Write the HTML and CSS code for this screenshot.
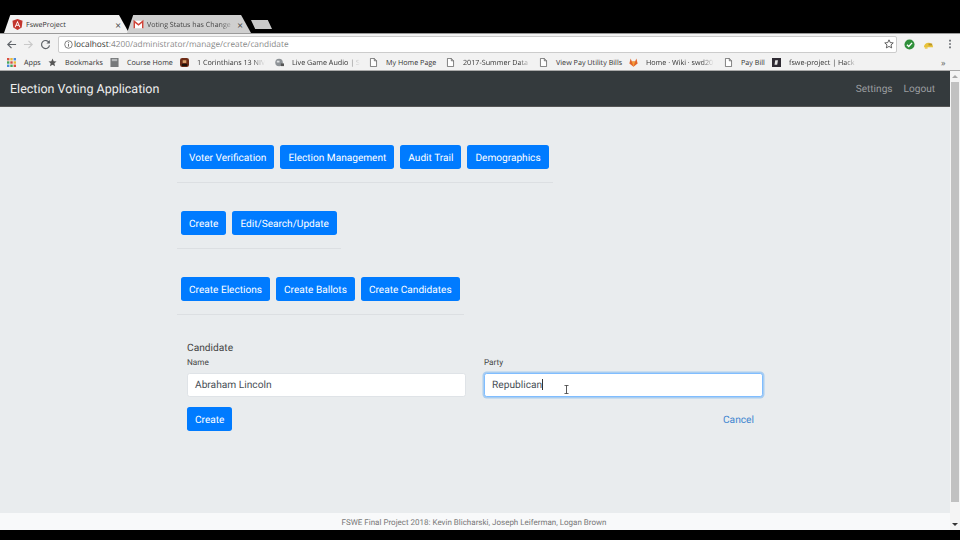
FILE: index.html
```html
<!DOCTYPE html>
<html lang="en">
<head>
    <meta charset="UTF-8">
    <title>FsweProject</title>
    <link rel="stylesheet" href="styles.css">
</head>
<body>
    <div class="tabstrip">
        <div class="tab tab-active">
            <svg class="tab-icon" viewBox="0 0 12 12"><path fill="#c3352e" d="M6 0 11.5 2 10.6 9.3 6 12 1.4 9.3.5 2z"/><path fill="#fff" d="M6 1.8 2.8 9h1.2l.6-1.6h2.8L8 9h1.2zM5 6.4 6 4l1 2.4z"/></svg>
            <span class="tab-title">FsweProject</span>
            <span class="tab-close">×</span>
        </div>
        <div class="tab tab-other">
            <svg class="tab-icon" viewBox="0 0 12 12"><path fill="#fff" d="M1 2h10v8H1z"/><path fill="none" stroke="#d0453a" stroke-width="1.6" d="M1.4 10V2.6L6 6.4l4.6-3.8V10"/></svg>
            <span class="tab-title tab-fade">Voting Status has Change</span>
            <span class="tab-close">×</span>
        </div>
        <div class="tab-new"></div>
    </div>

    <div class="toolbar">
        <svg class="tool-icon" viewBox="0 0 12 12"><path fill="none" stroke="#5f6368" stroke-width="1.3" d="M11 6H2M6 2 2 6l4 4"/></svg>
        <svg class="tool-icon" viewBox="0 0 12 12"><path fill="none" stroke="#c9c9c9" stroke-width="1.3" d="M1 6h9M6 2l4 4-4 4"/></svg>
        <svg class="tool-icon" viewBox="0 0 12 12"><path fill="none" stroke="#5f6368" stroke-width="1.3" d="M10 4A4.4 4.4 0 1 0 10.4 7"/><path fill="#5f6368" d="M10.8 1v3.8H7z"/></svg>
        <div class="omnibox">
            <svg class="info-icon" viewBox="0 0 10 10"><circle cx="5" cy="5" r="4.2" fill="none" stroke="#666" stroke-width=".9"/><path stroke="#666" d="M5 4.2v3.2M5 2.4v1"/></svg>
            <span class="url"><span class="url-host">localhost</span>:4200/administrator/manage/create/candidate</span>
            <svg class="star-icon" viewBox="0 0 12 12"><path fill="none" stroke="#444" d="m6 1 1.5 3.3 3.6.4-2.7 2.4.8 3.6L6 8.9l-3.2 1.8.8-3.6L.9 4.7l3.6-.4z"/></svg>
        </div>
        <div class="extensions">
            <svg class="ext-icon" viewBox="0 0 12 12"><circle cx="6" cy="6" r="5.5" fill="#2f8f3a"/><path fill="none" stroke="#fff" stroke-width="1.5" d="m3.2 6.2 2 2 3.6-4"/></svg>
            <svg class="ext-icon" viewBox="0 0 12 12"><path fill="#e8c23a" d="M1 9a5 5 0 0 1 10 0z"/><path fill="#b9962a" d="M6 5h4v2H6z"/><path fill="#e8c23a" d="M2 9h3v1.5H2z"/></svg>
            <svg class="menu-icon" viewBox="0 0 4 12"><path fill="#5f6368" d="M1 1h2v2H1zM1 5h2v2H1zM1 9h2v2H1z"/></svg>
        </div>
    </div>

    <div class="bookmarks">
        <div class="bm">
            <svg class="bm-icon" viewBox="0 0 9 9"><path fill="#d9503f" d="M0 0h2.4v2.4H0z"/><path fill="#e8b83a" d="M3.3 0h2.4v2.4H3.3z"/><path fill="#4a8bdc" d="M6.6 0H9v2.4H6.6z"/><path fill="#4aa65a" d="M0 3.3h2.4v2.4H0z"/><path fill="#d9503f" d="M3.3 3.3h2.4v2.4H3.3z"/><path fill="#e8b83a" d="M6.6 3.3H9v2.4H6.6z"/><path fill="#4a8bdc" d="M0 6.6h2.4V9H0z"/><path fill="#4aa65a" d="M3.3 6.6h2.4V9H3.3z"/><path fill="#d9503f" d="M6.6 6.6H9V9H6.6z"/></svg>
            <span>Apps</span>
        </div>
        <div class="bm">
            <svg class="bm-icon" viewBox="0 0 10 10"><path fill="#555" d="m5 .5 1.3 3 3.2.3-2.4 2.1.7 3.2L5 7.4 2.2 9.1l.7-3.2L.5 3.8l3.2-.3z"/></svg>
            <span>Bookmarks</span>
        </div>
        <div class="bm">
            <svg class="bm-icon" viewBox="0 0 9 10"><path fill="#77797b" d="M0 0h9v10H0z"/><path fill="#b4b6b8" d="M1.5 1h6v2.5h-6z"/></svg>
            <span>Course Home</span>
        </div>
        <div class="bm">
            <svg class="bm-icon" viewBox="0 0 10 10"><rect width="10" height="10" rx="2.5" fill="#6e2c16"/><path fill="#d9a06a" d="M3 2.5h4v3H3z"/><path fill="#1e1008" d="M2 6.5h6V9H2z"/></svg>
            <span class="bm-fade">1 Corinthians 13 NIV</span>
        </div>
        <div class="bm">
            <svg class="bm-icon" viewBox="0 0 10 10"><circle cx="4.5" cy="5" r="4.2" fill="#8d9296"/><path fill="#dfe2e4" d="M2 3h3v2H2z"/><path fill="#555" d="M6.5 6H10v3H6.5z"/></svg>
            <span class="bm-fade">Live Game Audio | S</span>
        </div>
        <div class="bm">
            <svg class="bm-icon" viewBox="0 0 8 10"><path fill="#fff" stroke="#555" stroke-width=".8" d="M.6.5h4.3l2.5 2.6v6.4H.6zM4.9.5v2.6h2.5"/></svg>
            <span>My Home Page</span>
        </div>
        <div class="bm">
            <svg class="bm-icon" viewBox="0 0 8 10"><path fill="#fff" stroke="#555" stroke-width=".8" d="M.6.5h4.3l2.5 2.6v6.4H.6zM4.9.5v2.6h2.5"/></svg>
            <span class="bm-fade">2017-Summer Data</span>
        </div>
        <div class="bm">
            <svg class="bm-icon" viewBox="0 0 8 10"><path fill="#fff" stroke="#555" stroke-width=".8" d="M.6.5h4.3l2.5 2.6v6.4H.6zM4.9.5v2.6h2.5"/></svg>
            <span>View Pay Utility Bills</span>
        </div>
        <div class="bm">
            <svg class="bm-icon" viewBox="0 0 10 10"><path fill="#e2662a" d="M5 9.6 .4 6 1.8.6 3.2 4h3.6L8.2.6 9.6 6z"/><path fill="#f6a23c" d="M5 9.6 3.2 4h3.6z"/></svg>
            <span class="bm-fade">Home · Wiki · swd20</span>
        </div>
        <div class="bm">
            <svg class="bm-icon" viewBox="0 0 8 10"><path fill="#fff" stroke="#555" stroke-width=".8" d="M.6.5h4.3l2.5 2.6v6.4H.6zM4.9.5v2.6h2.5"/></svg>
            <span>Pay Bill</span>
        </div>
        <div class="bm">
            <svg class="bm-icon" viewBox="0 0 10 10"><path fill="#2f2b33" d="M0 0h10v10H0z"/><path fill="#e6e6e6" d="M3.6 2.4h3l-.8 5.2h-3z"/></svg>
            <span class="bm-fade">fswe-project | Hack</span>
        </div>
        <span class="bm-more">»</span>
    </div>

    <div class="window">
        <div class="app">
            <nav class="navbar">
                <span class="brand">Election Voting Application</span>
                <div class="nav-links">
                    <a class="nav-link">Settings</a>
                    <a class="nav-link">Logout</a>
                </div>
            </nav>

            <main class="content">
                <div class="menu">
                    <button class="btn">Voter Verification</button>
                    <button class="btn">Election Management</button>
                    <button class="btn">Audit Trail</button>
                    <button class="btn">Demographics</button>
                </div>
                <div class="menu">
                    <button class="btn">Create</button>
                    <button class="btn">Edit/Search/Update</button>
                </div>
                <div class="menu">
                    <button class="btn">Create Elections</button>
                    <button class="btn">Create Ballots</button>
                    <button class="btn">Create Candidates</button>
                </div>

                <form class="form">
                    <div class="form-title">Candidate</div>
                    <div class="form-row">
                        <div>
                            <label class="form-label">Name</label>
                            <div class="input">Abraham Lincoln</div>
                        </div>
                        <div>
                            <label class="form-label">Party</label>
                            <div class="input input-focus">Republican<span class="caret"></span></div>
                        </div>
                    </div>
                    <div class="form-actions">
                        <button class="btn" type="button">Create</button>
                        <a class="cancel">Cancel</a>
                    </div>
                </form>

                <svg class="ibeam" viewBox="0 0 7 11"><path fill="none" stroke="#333" d="M1 .5h5M3.5.5v10M1 10.5h5"/></svg>
            </main>

            <footer class="footer">FSWE Final Project 2018: Kevin Blicharski, Joseph Leiferman, Logan Brown</footer>
        </div>

        <div class="scrollbar">
            <span class="arrow arrow-up"></span>
            <div class="thumb"></div>
            <span class="arrow arrow-down"></span>
        </div>
    </div>

    <div class="bottom-bar"></div>
</body>
</html>
```

FILE: styles.css
```css
html, body {
    margin: 0;
    height: 540px;
    overflow: hidden;
    background-color: #000;
}
body {
    display: flex;
    flex-direction: column;
    font-family: Roboto, Arial, sans-serif;
    text-rendering: geometricPrecision;
}

/* browser chrome */
.tabstrip {
    height: 18px;
    padding: 15px 0 0 4px;
    display: flex;
    align-items: flex-end;
    background-color: #000;
}
.tab {
    height: 18px;
    width: 125px;
    box-sizing: border-box;
    padding: 1px 8px 0 8px;
    display: flex;
    align-items: center;
    gap: 3px;
    font-family: "Open Sans", Arial, sans-serif;
    font-size: 7.1px;
    clip-path: polygon(0 100%, 5% 0, 92% 0, 100% 100%);
}
.tab-active {
    background-color: #f2f2f2;
    color: #333;
}
.tab-other {
    margin-left: -2px;
    padding-left: 6px;
    width: 124px;
    background-color: #cfcfcf;
    color: #444;
}
.tab-icon {
    width: 11px;
    height: 11px;
    flex: none;
}
.tab-title {
    flex: 1;
    white-space: nowrap;
    overflow: hidden;
}
.tab-fade {
    -webkit-mask-image: linear-gradient(to right, #000 85%, transparent);
    mask-image: linear-gradient(to right, #000 85%, transparent);
}
.tab-close {
    font-size: 10px;
    color: #444;
}
.tab-new {
    width: 21px;
    height: 9px;
    margin: 0 0 4px 0;
    background-color: #c9c9c9;
    clip-path: polygon(0 0, 80% 0, 100% 100%, 20% 100%);
}
.toolbar {
    height: 21px;
    display: flex;
    align-items: center;
    padding: 0 7px 0 6px;
    background-color: #f2f2f2;
    border-top: 1px solid #9a9a9a;
    box-sizing: border-box;
}
.tool-icon {
    width: 11px;
    height: 11px;
    margin-right: 6px;
}
.omnibox {
    flex: 1;
    height: 17px;
    margin-left: 1px;
    display: flex;
    align-items: center;
    padding: 0 2px 0 5px;
    background-color: #fff;
    border: 1px solid #ccc;
    border-radius: 2px;
    box-sizing: border-box;
}
.info-icon {
    width: 9px;
    height: 9px;
    margin-right: 1px;
}
.url {
    flex: 1;
    font-family: "Open Sans", Arial, sans-serif;
    font-size: 8.3px;
    color: #8a8a8a;
}
.url-host {
    color: #333;
}
.star-icon {
    width: 10px;
    height: 10px;
}
.extensions {
    display: flex;
    align-items: center;
    width: 56px;
    padding-left: 7px;
    box-sizing: border-box;
    gap: 8px;
    flex: none;
}
.ext-icon {
    width: 11px;
    height: 11px;
}
.menu-icon {
    width: 4px;
    height: 10px;
    margin-left: 6px;
}
.bookmarks {
    height: 17px;
    padding: 1px 0 0 7px;
    display: grid;
    grid-template-columns: 41px 62px 70px 95px 94px 77px 93px 90px 95px 48px 169px 12px;
    align-items: center;
    background-color: #f2f2f2;
    border-bottom: 1px solid #aaa;
    box-sizing: border-box;
    font-family: "Open Sans", Arial, sans-serif;
    font-size: 7.2px;
    color: #333;
}
.bm {
    display: flex;
    align-items: center;
    gap: 8px;
    white-space: nowrap;
}
.bm-icon {
    width: 9px;
    height: 9px;
    flex: none;
}
.bm-fade {
    width: 68px;
    overflow: hidden;
    -webkit-mask-image: linear-gradient(to right, #000 82%, transparent);
    mask-image: linear-gradient(to right, #000 82%, transparent);
}
.bm-more {
    font-size: 9px;
    color: #666;
}

/* the app */
.window {
    flex: 1;
    display: flex;
    min-height: 0;
}
.app {
    flex: 1;
    position: relative;
    display: flex;
    flex-direction: column;
    background-color: #e9ecee;
}
.navbar {
    height: 36px;
    flex: none;
    display: flex;
    align-items: center;
    justify-content: space-between;
    padding: 2px 15px 0 10px;
    box-sizing: border-box;
    background-color: #343a3d;
    border-bottom: 1px solid #555;
}
.brand {
    font-size: 12.5px;
    color: #eee;
}
.nav-links {
    display: flex;
    gap: 11px;
}
.nav-link {
    font-size: 10.1px;
    color: #9a9da0;
}
.content {
    flex: 1;
    padding: 38px 0 0 177px;
}
.menu {
    width: fit-content;
    padding: 0 4px 13px;
    margin-bottom: 28px;
    display: flex;
    gap: 6px;
    border-bottom: 1px solid #dcdfe2;
}
.btn {
    height: 24px;
    padding: 2px 8px 0;
    background-color: #007bff;
    color: #fff;
    border: none;
    border-radius: 2.7px;
    font-family: Roboto, Arial, sans-serif;
    font-size: 10.1px;
    text-rendering: geometricPrecision;
}
.form {
    width: 576px;
    margin: -2px 0 0 10px;
}
.form-title {
    font-size: 10.2px;
    line-height: 16px;
    color: #444;
}
.form-row {
    display: grid;
    grid-template-columns: 279px 279px;
    gap: 18px;
}
.form-label {
    display: block;
    font-size: 8.2px;
    line-height: 12px;
    margin-bottom: 4px;
    color: #444;
}
.input {
    height: 24px;
    line-height: 24px;
    padding: 0 7px;
    box-sizing: border-box;
    background-color: #fff;
    border: 1px solid #dfe3e7;
    border-radius: 2.7px;
    font-size: 10.2px;
    color: #495057;
}
.input-focus {
    border-color: #80bdff;
    box-shadow: 0 0 0 1.5px #a9cdf0;
}
.caret {
    display: inline-block;
    width: 1px;
    height: 11px;
    background-color: #333;
    vertical-align: -2px;
}
.form-actions {
    display: flex;
    justify-content: space-between;
    align-items: center;
    margin-top: 10px;
    padding-right: 9px;
}
.cancel {
    padding-top: 2px;
    font-size: 10.2px;
    color: #3f86d0;
}
.ibeam {
    position: absolute;
    left: 563px;
    top: 314px;
    width: 7px;
    height: 9px;
}
.footer {
    height: 17px;
    flex: none;
    line-height: 19px;
    text-align: center;
    padding-right: 2px;
    box-sizing: border-box;
    background-color: #f8f9fa;
    font-size: 8px;
    color: #777;
}
.scrollbar {
    width: 10px;
    flex: none;
    position: relative;
    background-color: #f4f4f4;
}
.thumb {
    margin: 11px 1px 0;
    height: 420px;
    background-color: #c1c1c1;
}
.arrow {
    position: absolute;
    left: 2px;
    width: 0;
    height: 0;
    border-left: 3px solid transparent;
    border-right: 3px solid transparent;
}
.arrow-up {
    top: 4px;
    border-bottom: 3px solid #a8a8a8;
}
.arrow-down {
    bottom: 4px;
    border-top: 3px solid #333;
}
.bottom-bar {
    height: 10px;
    flex: none;
    background-color: #000;
}
```
